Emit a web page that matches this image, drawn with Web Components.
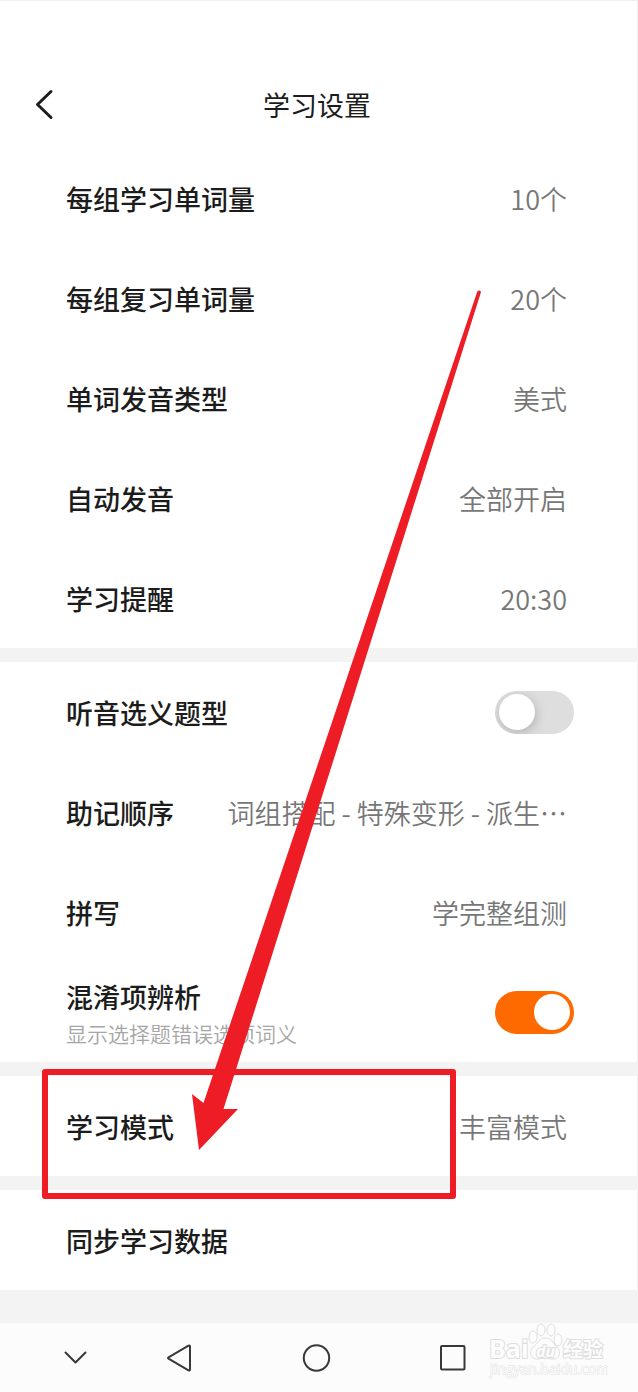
<!DOCTYPE html>
<html lang="zh-CN">
<head>
<meta charset="UTF-8">
<meta name="viewport" content="width=device-width, initial-scale=1">
<title>学习设置</title>
<style>
    body {
        margin: 0;
        background: #fff;
        color: #1c1c1c;
        font-family: "Noto Sans CJK SC", "Noto Sans", sans-serif;
        font-size: 27px;
        line-height: 40px;
    }
</style>
</head>
<body>
<study-settings></study-settings>

<script>
const RESET = `
    :host, * { box-sizing: border-box; }
    button {
        margin: 0;
        padding: 0;
        border: 0;
        background: none;
        color: inherit;
        font: inherit;
        cursor: pointer;
    }
    svg { display: block; }
`;

class SettingsHeader extends HTMLElement {
    constructor() {
        super();
        this.attachShadow({ mode: 'open' });
    }

    connectedCallback() {
        this.shadowRoot.innerHTML = `
            <style>
                ${RESET}
                :host {
                    display: grid;
                    grid-template-columns: 72px 1fr 72px;
                    align-items: center;
                    height: 148px;
                    padding: 62px 4px 0 0;
                }
                button { padding: 8px 16px 8px 32px; }
                h1 {
                    margin: 0;
                    font-size: 27px;
                    font-weight: 400;
                    text-align: center;
                }
            </style>
            <button type="button" aria-label="返回">
                <svg width="24" height="32" viewBox="0 0 24 32" fill="none" stroke="#1c1c1c" stroke-width="3" stroke-linecap="round" stroke-linejoin="round">
                    <path d="M19 2.5 L5.5 15.5 L19 28.5"/>
                </svg>
            </button>
            <h1><slot></slot></h1>
        `;
    }
}

class SettingsGroup extends HTMLElement {
    constructor() {
        super();
        this.attachShadow({ mode: 'open' });
    }

    connectedCallback() {
        this.shadowRoot.innerHTML = `
            <style>
                :host {
                    display: block;
                    border-bottom: 14px solid #f3f3f3;
                }
                :host([last]) { border-bottom-width: 33px; }
            </style>
            <slot></slot>
        `;
    }
}

class SettingRow extends HTMLElement {
    constructor() {
        super();
        this.attachShadow({ mode: 'open' });
    }

    connectedCallback() {
        this.shadowRoot.innerHTML = `
            <style>
                ${RESET}
                :host { display: block; }
                button {
                    display: flex;
                    align-items: center;
                    justify-content: space-between;
                    gap: 24px;
                    width: 100%;
                    height: 100px;
                    padding: 2px 71px 0 66px;
                    white-space: nowrap;
                }
                .label { font-weight: 500; }
                .value {
                    color: #777;
                    font-weight: 350;
                }
            </style>
            <button type="button">
                <span class="label"><slot></slot></span>
                <span class="value"><slot name="value"></slot></span>
            </button>
        `;
    }
}

class SettingToggle extends HTMLElement {
    constructor() {
        super();
        this.attachShadow({ mode: 'open' });
    }

    connectedCallback() {
        this.shadowRoot.innerHTML = `
            <style>
                ${RESET}
                :host { display: block; }
                label {
                    display: flex;
                    align-items: center;
                    justify-content: space-between;
                    height: 100px;
                    padding: 0 64px 0 66px;
                    cursor: pointer;
                }
                .text {
                    display: flex;
                    flex-direction: column;
                    padding-top: 2px;
                    font-weight: 500;
                }
                ::slotted([slot="hint"]) {
                    color: #a6a6a6;
                    font-size: 21px;
                    font-weight: 350;
                    line-height: 32px;
                }
                input {
                    appearance: none;
                    display: flex;
                    align-items: center;
                    width: 79px;
                    height: 43px;
                    margin: 0;
                    padding: 0 4px;
                    border-radius: 22px;
                    background: #dedede;
                    overflow: hidden;
                    cursor: pointer;
                }
                input::before {
                    content: "";
                    width: 36px;
                    height: 36px;
                    border-radius: 50%;
                    background: #fff;
                    box-shadow: 1px 3px 12px rgba(0, 0, 0, 0.2);
                }
                input:checked {
                    justify-content: flex-end;
                    background: #ff6a00;
                }
                input:checked::before { box-shadow: none; }
            </style>
            <label>
                <span class="text"><slot></slot><slot name="hint"></slot></span>
                <input type="checkbox">
            </label>
        `;

        this.shadowRoot.querySelector('input').checked = this.hasAttribute('checked');
    }
}

class SiteWatermark extends HTMLElement {
    constructor() {
        super();
        this.attachShadow({ mode: 'open' });
    }

    connectedCallback() {
        this.shadowRoot.innerHTML = `
            <style>
                :host { display: block; pointer-events: none; }
                svg { display: block; }
                text {
                    font-family: "Open Sans", "Noto Sans CJK SC", sans-serif;
                    font-weight: 700;
                    paint-order: stroke;
                }
                .url { font-weight: 400; }
            </style>
            <svg width="120" height="62" viewBox="0 0 120 62" fill="#fdfdfd" stroke="#dedede" stroke-width="2" stroke-linejoin="round">
                <text x="1" y="36" font-size="25">Bai</text>
                <ellipse cx="45" cy="15" rx="4" ry="6" stroke-width="1"/>
                <ellipse cx="53" cy="8" rx="4" ry="6" stroke-width="1"/>
                <ellipse cx="63" cy="8" rx="4" ry="6" stroke-width="1"/>
                <ellipse cx="70" cy="18" rx="4" ry="6" stroke-width="1"/>
                <path stroke-width="1" d="M57 16 C51 16 50 22 45 25 C40 30 43 38 50 37 C55 36 59 36 64 37 C71 38 74 31 69 25 C64 21 64 16 57 16 Z"/>
                <text x="48" y="35" font-size="16" font-style="italic">du</text>
                <text x="75" y="35" font-size="20">经验</text>
                <text class="url" x="2" y="52" font-size="14" stroke-width="1">jingyan.baidu.com</text>
            </svg>
        `;
    }
}

class SystemNav extends HTMLElement {
    constructor() {
        super();
        this.attachShadow({ mode: 'open' });
    }

    connectedCallback() {
        this.shadowRoot.innerHTML = `
            <style>
                ${RESET}
                :host {
                    display: block;
                    position: relative;
                    background: #fcfcfc;
                }
                nav {
                    display: grid;
                    grid-template-columns: 40fr 70fr 137fr 137fr 137fr 117fr;
                    height: 69px;
                }
                button {
                    display: grid;
                    place-items: center;
                }
                button:first-child { grid-column: 2; }
                svg {
                    fill: none;
                    stroke: #383838;
                    stroke-width: 2;
                    stroke-linecap: round;
                    stroke-linejoin: round;
                }
                site-watermark {
                    position: absolute;
                    right: 30px;
                    bottom: 8px;
                }
            </style>
            <nav>
                <button type="button" aria-label="收起">
                    <svg width="30" height="30" viewBox="0 0 30 30"><path d="M5.5 9.5 L15.5 19.5 L25.5 9.5"/></svg>
                </button>
                <button type="button" aria-label="后退">
                    <svg width="30" height="30" viewBox="0 0 30 30"><path d="M4.5 14.4 L24.5 2.6 Q26 2 26 3.5 V26.5 Q26 28 24.5 27.4 L4.5 15.6 Q3.5 15 4.5 14.4 Z"/></svg>
                </button>
                <button type="button" aria-label="主屏幕">
                    <svg width="30" height="30" viewBox="0 0 30 30"><circle cx="15.5" cy="15" r="12.7"/></svg>
                </button>
                <button type="button" aria-label="最近任务">
                    <svg width="30" height="30" viewBox="0 0 30 30"><rect x="3" y="3" width="23.5" height="23.5" rx="1"/></svg>
                </button>
            </nav>
            <site-watermark></site-watermark>
        `;
    }
}

// Red frame and arrow that lie over the list
class GuideMarks extends HTMLElement {
    constructor() {
        super();
        this.attachShadow({ mode: 'open' });
    }

    connectedCallback() {
        this.shadowRoot.innerHTML = `
            <style>
                :host { display: block; pointer-events: none; }
                svg { display: block; }
            </style>
            <svg width="500" height="1210" viewBox="0 0 500 1210" aria-hidden="true">
                <rect x="45" y="1072" width="408" height="124" fill="none" stroke="#ee1c25" stroke-width="6" stroke-linejoin="round"/>
                <path fill="#ee1c25" d="M477.3 291.5 Q479 289.5 480.9 291.5 L480.7 293 L223.5 1109 L238 1109 L199 1150 L192 1094 L203.5 1103 Z"/>
            </svg>
        `;
    }
}

class StudySettings extends HTMLElement {
    constructor() {
        super();
        this.attachShadow({ mode: 'open' });
    }

    connectedCallback() {
        this.shadowRoot.innerHTML = `
            <style>
                :host {
                    display: block;
                    position: relative;
                    box-shadow: inset -1px 1px #efefef;
                }
                guide-marks {
                    position: absolute;
                    top: 0;
                    left: 0;
                }
            </style>
            <settings-header>学习设置</settings-header>
            <main>
                <settings-group>
                    <setting-row>每组学习单词量<span slot="value">10个</span></setting-row>
                    <setting-row>每组复习单词量<span slot="value">20个</span></setting-row>
                    <setting-row>单词发音类型<span slot="value">美式</span></setting-row>
                    <setting-row>自动发音<span slot="value">全部开启</span></setting-row>
                    <setting-row>学习提醒<span slot="value">20:30</span></setting-row>
                </settings-group>
                <settings-group>
                    <setting-toggle>听音选义题型</setting-toggle>
                    <setting-row>助记顺序<span slot="value">词组搭配 - 特殊变形 - 派生…</span></setting-row>
                    <setting-row>拼写<span slot="value">学完整组测</span></setting-row>
                    <setting-toggle checked>混淆项辨析<span slot="hint">显示选择题错误选项词义</span></setting-toggle>
                </settings-group>
                <settings-group>
                    <setting-row>学习模式<span slot="value">丰富模式</span></setting-row>
                </settings-group>
                <settings-group last>
                    <setting-row>同步学习数据</setting-row>
                </settings-group>
            </main>
            <system-nav></system-nav>
            <guide-marks></guide-marks>
        `;
    }
}

customElements.define('settings-header', SettingsHeader);
customElements.define('settings-group', SettingsGroup);
customElements.define('setting-row', SettingRow);
customElements.define('setting-toggle', SettingToggle);
customElements.define('site-watermark', SiteWatermark);
customElements.define('system-nav', SystemNav);
customElements.define('guide-marks', GuideMarks);
customElements.define('study-settings', StudySettings);
</script>
</body>
</html>
